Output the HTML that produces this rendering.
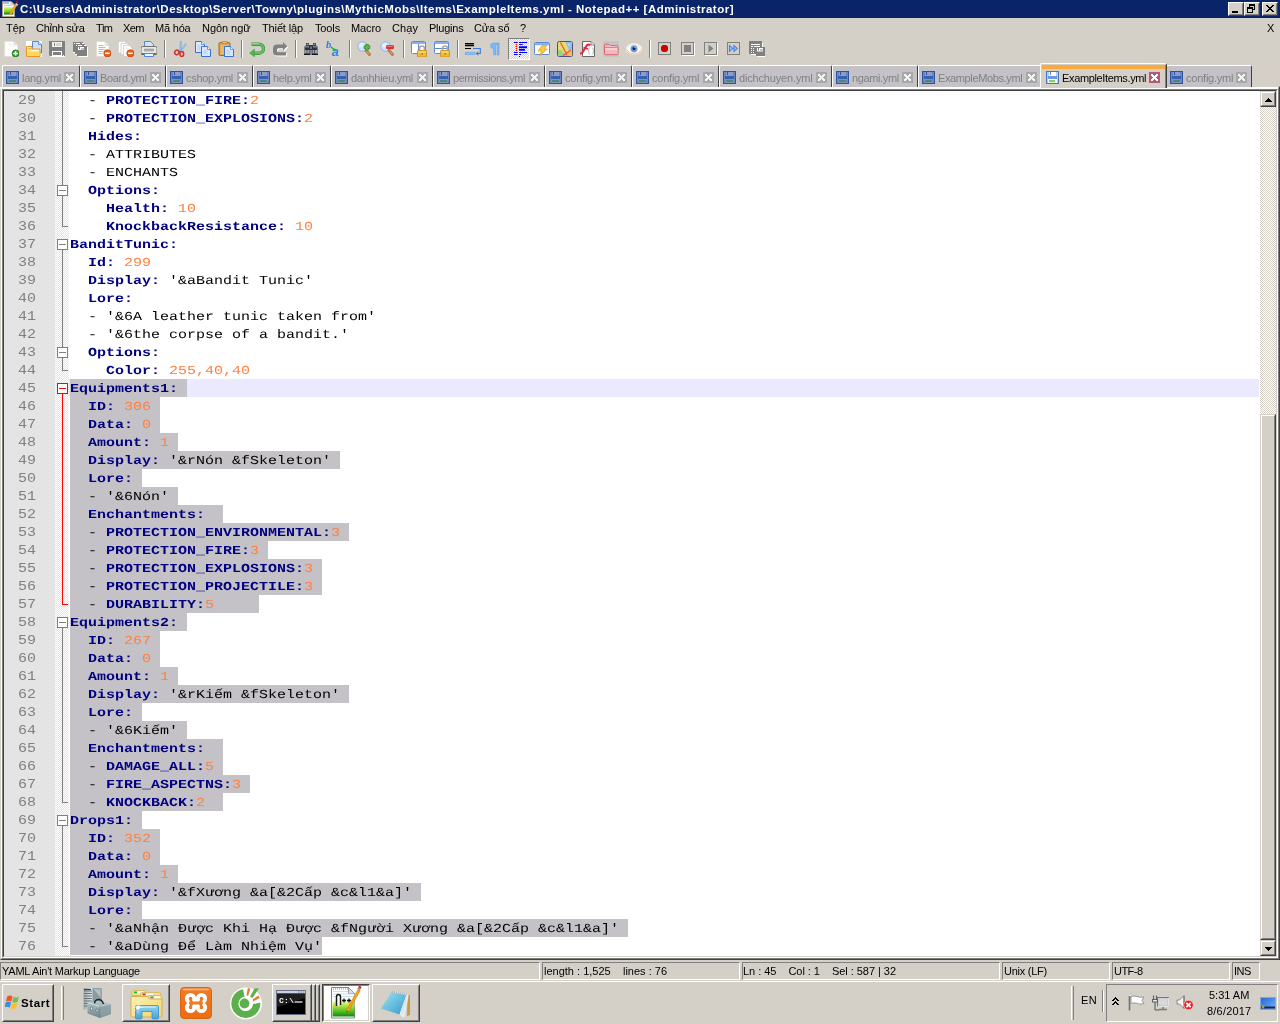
<!DOCTYPE html>
<html><head><meta charset="utf-8"><title>Notepad++</title>
<style>
*{box-sizing:border-box;margin:0;padding:0}
html,body{width:1280px;height:1024px;overflow:hidden;background:#d4d0c8;font-family:"Liberation Sans",sans-serif;font-size:11px;color:#000}
.a{position:absolute}
#title{left:0;top:0;width:1280px;height:18px;background:#0a246a}
#title .t{left:20px;top:1px;height:16px;line-height:16px;color:#fff;font-weight:bold;font-size:11.5px;white-space:nowrap;transform-origin:0 0}
.mi{top:21px;height:14px;line-height:14px;white-space:nowrap;font-size:11px;transform-origin:0 50%}
.tb{top:41px;width:16px;height:16px}
.tsep{top:40px;width:2px;height:18px;border-left:1px solid #808080;border-right:1px solid #fff}
/* tabs */
.tab{top:65px;height:22px;background:#c4c2c6;border-top:1px solid #fff;border-left:1px solid #fff;border-right:1px solid #404040;border-top-left-radius:2px;border-top-right-radius:2px}
.tab .ti{left:3px;top:5px;width:13px;height:13px}
.tab .tl{left:19px;top:5px;line-height:15px;color:#808080;font-size:11px;white-space:nowrap;transform-origin:0 50%}
.tab .tx{right:4px;top:6px;width:11px;height:11px}
.tab.act{top:63px;height:25px;background:#d4d0c8;z-index:2}
.tab.act:after{content:"";position:absolute;right:0;top:1px;bottom:0;width:1px;background:#808080}
.tab.act .or{left:1px;top:1px;right:1px;height:4px;background:#faaa3c}
.tab.act .ti{left:5px;top:7px}
.tab.act .tl{left:21px;top:7px;color:#000}
.tab.act .tx{right:6px;top:8px}
/* editor */
#fr{left:0;top:86px;width:1280px;height:874px;border:1px solid;border-color:transparent #404040 #404040 transparent}
#fr:before{content:"";position:absolute;left:0;top:0;right:0;bottom:0;border:1px solid;border-color:transparent #808080 #808080 #fff}
#ed{left:2px;top:89px;width:1276px;height:869px;background:#fff;border:1px solid;border-color:#808080 #fff #fff #808080}
#ed2{left:3px;top:90px;width:1274px;height:867px;border:1px solid;border-color:#404040 #d4d0c8 #d4d0c8 #404040}
#lnm{left:4px;top:91px;width:51px;height:865px;background:#e4e4e4}
#fm{left:55px;top:91px;width:14px;height:865px;background-color:#fff;background-image:linear-gradient(45deg,#e4e4e4 25%,transparent 25%,transparent 75%,#e4e4e4 75%),linear-gradient(45deg,#e4e4e4 25%,transparent 25%,transparent 75%,#e4e4e4 75%);background-size:2px 2px;background-position:0 0,1px 1px}
.ln{left:4px;width:32px;height:18px;line-height:18px;text-align:right;color:#808080;font-family:"Liberation Mono",monospace;font-size:15px;transform:translateY(1px) scaleY(.9);transform-origin:0 12px}
.cl{left:70px;height:18px;line-height:18px;font-family:"Liberation Mono",monospace;font-size:15px;white-space:pre;color:#000;text-rendering:geometricPrecision;transform:translateY(1px) scaleY(.82);transform-origin:0 12px}
.k{color:#000080;font-weight:bold}
.n{color:#ff8040}
.sel{left:70px;background:#c4c2c6;height:18px}
#cur{left:69px;top:379px;width:1190px;height:18px;background:#ebe9fe}
.fv{width:1px;background:#808080;left:62px}
.fh{height:1px;background:#808080;left:62px;width:6px}
.fb{left:57px;width:11px;height:11px;border:1px solid #808080;background:#fff}
.fb i{position:absolute;left:1px;top:4px;width:7px;height:1px;background:#808080}
.r{background:#ff0000 !important;border-color:#ff0000 !important}
.fb.r{background:#fff !important}
.fb.r i{background:#ff0000}
/* scrollbar */
#sbt{left:1260px;top:91px;width:16px;height:865px;background-color:#fff;background-image:linear-gradient(45deg,#d4d0c8 25%,transparent 25%,transparent 75%,#d4d0c8 75%),linear-gradient(45deg,#d4d0c8 25%,transparent 25%,transparent 75%,#d4d0c8 75%);background-size:2px 2px;background-position:0 0,1px 1px}
.sbb{left:1260px;width:16px;height:16px;background:#d4d0c8;border:1px solid;border-color:#d4d0c8 #404040 #404040 #d4d0c8}
.sbb:before{content:"";position:absolute;left:0;top:0;right:0;bottom:0;border:1px solid;border-color:#fff #808080 #808080 #fff}
/* status */
.sp{top:962px;height:18px;border:1px solid;border-color:#808080 #fff #fff #808080;font-size:11px;line-height:13px}
/* taskbar */
#tk{left:0;top:980px;width:1280px;height:44px}
#tk:before{content:"";position:absolute;left:0;top:1px;width:1280px;height:1px;background:#fff}
.rb{border:1px solid;border-color:#fff #404040 #404040 #fff}
.rb:before{content:"";position:absolute;left:0;top:0;right:0;bottom:0;border:1px solid;border-color:#d4d0c8 #808080 #808080 #d4d0c8}
.cb{top:2px;width:16px;height:14px;background:#d4d0c8;border:1px solid;border-color:#fff #404040 #404040 #fff}
.cb:before{content:"";position:absolute;left:0;top:0;right:0;bottom:0;border:1px solid;border-color:#d4d0c8 #808080 #808080 #d4d0c8}
.tpr{top:38px;width:22px;height:22px;border:1px solid;border-color:#808080 #fff #fff #808080;background-color:#fff;background-image:linear-gradient(45deg,#d4d0c8 25%,transparent 25%,transparent 75%,#d4d0c8 75%),linear-gradient(45deg,#d4d0c8 25%,transparent 25%,transparent 75%,#d4d0c8 75%);background-size:2px 2px;background-position:0 0,1px 1px}
.pb{border:1px solid;border-color:#404040 #fff #fff #404040;background-color:#fff}
.pb:before{content:"";position:absolute;left:0;top:0;right:0;bottom:0;border:1px solid;border-color:#808080 #d4d0c8 #d4d0c8 #808080}
#root{position:absolute;left:0;top:0;width:1280px;height:1024px;will-change:transform}

</style></head><body><div id="root">
<div id="title" class="a"><svg class="a" style="left:2px;top:0px" width="18" height="18" viewBox="0 0 18 18"><defs><linearGradient id="gt" x1="0" x2="0" y1="0" y2="1"><stop offset="0" stop-color="#e8f060"/><stop offset=".6" stop-color="#78d030"/><stop offset="1" stop-color="#0c6c0c"/></linearGradient></defs>
<path d="M.5 1.500h8.500l3.500 3.500v11.500h-12z" fill="#fff" stroke="#a8a090" stroke-width="1"/><path d="M9 1.500v3.500h3.500z" fill="#e8e8e8" stroke="#a0a0a0" stroke-width=".6"/>
<path d="M2 2.500v1M4 2.500v1M6 2.500v1" stroke="#0a246a" stroke-width="1.200"/><path d="M2 5.500h7" stroke="#c0d4e8" stroke-width="1"/><path d="M2 7.200h9.500v7.300h-9.500z" fill="url(#gt)"/>
<path d="M14 3.500l1.600 1l-6.200 9.500l-1.800 1l.2 -2z" fill="#f8b010" stroke="#d08808" stroke-width=".5"/><path d="M13.300 4.300l2.300 1.400l.8 -1.300l-2.300 -1.400z" fill="#c0cce0"/><circle cx="15.300" cy="1.800" r="1.300" fill="#c80010"/></svg>
<div class="a t" id="tt" style="letter-spacing:0.49px;">C:\Users\Administrator\Desktop\Server\Towny\plugins\MythicMobs\Items\ExampleItems.yml - Notepad++ [Administrator]</div><div class="a cb" style="left:1228px"><svg class="a" style="left:2px;top:2px" width="9" height="9" viewBox="0 0 9 9" shape-rendering="crispEdges"><rect x="1" y="6" width="6" height="2" fill="#000"/></svg></div>
<div class="a cb" style="left:1244px"><svg class="a" style="left:1px;top:1px" width="10" height="10" viewBox="0 0 10 10" shape-rendering="crispEdges"><path d="M3 0h6v6H7V5h1V2H4v1H3z M1 3h6v6H1z M2 5v3h4V5z" fill="#000" fill-rule="evenodd"/></svg></div>
<div class="a cb" style="left:1262px"><svg class="a" style="left:3px;top:2px" width="9" height="9" viewBox="0 0 9 9" shape-rendering="crispEdges"><path d="M0 0h2v1h1v1h2V1h1V0h2v1H7v1H6v1H5v1h1v1h1v1h1v1H6V6H5V5H3v1H2v1H0V6h1V5h1V4h1V3H2V2H1V1H0z" fill="#000"/></svg></div>
</div>
<div class="a mi" id="m0" style="left:6px;letter-spacing:0.01px;">Tệp</div><div class="a mi" id="m1" style="left:36px;letter-spacing:-0.253px;">Chỉnh sửa</div><div class="a mi" id="m2" style="left:96px;letter-spacing:-0.984px;">Tìm</div><div class="a mi" id="m3" style="left:123px;letter-spacing:-0.542px;">Xem</div><div class="a mi" id="m4" style="left:155px;letter-spacing:-0.201px;">Mã hóa</div><div class="a mi" id="m5" style="left:202px;letter-spacing:-0.057px;">Ngôn ngữ</div><div class="a mi" id="m6" style="left:262px;letter-spacing:-0.134px;">Thiết lập</div><div class="a mi" id="m7" style="left:315px;letter-spacing:-0.138px;">Tools</div><div class="a mi" id="m8" style="left:351px;letter-spacing:-0.113px;">Macro</div><div class="a mi" id="m9" style="left:392px;letter-spacing:0.078px;">Chạy</div><div class="a mi" id="m10" style="left:429px;letter-spacing:-0.225px;">Plugins</div><div class="a mi" id="m11" style="left:474px;letter-spacing:-0.102px;">Cửa sổ</div><div class="a mi" id="m12" style="left:520px;letter-spacing:-0.125px;">?</div><div class="a mi" style="left:1267px">X</div>
<svg class="a tb" style="left:3px" viewBox="0 0 16 16"><path d="M1.700 .5h9.300l3.500 3.500v11.300h-12.800z" fill="#fff" stroke="#e4e2de" stroke-width=".6"/><path d="M11 .5v3.500h3.500z" fill="#e8e8e8" stroke="#d0d0d0" stroke-width=".5"/><path d="M5 3h4M6 5h5" stroke="#eee" stroke-width="1"/>
<circle cx="12.600" cy="12.400" r="3.500" fill="#3a9a2c" stroke="#1f7a18" stroke-width=".8"/><path d="M12.600 10.200v4.400M10.400 12.400h4.400" stroke="#fff" stroke-width="1.5"/></svg>
<svg class="a tb" style="left:26px" viewBox="0 0 16 16"><rect x="0" y="0" width="16" height="16" fill="#fff"/><rect x="0" y="0" width="6" height="5" fill="#fff"/>
<path d="M6.5 .5h6l3 3v8.500h-9z" fill="#cfe0fb" stroke="#4a88e0" stroke-width="1"/><path d="M12.500 .5v3h3" fill="#e8f0ff" stroke="#4a88e0" stroke-width=".8"/>
<path d="M.5 5.500h5.500v2.500h8v7.500h-13.500z" fill="#fbe58a" stroke="#e8962c" stroke-width="1"/><path d="M1 11h12.500v4h-12.500z" fill="#f8d64e" opacity=".8"/><path d="M2 7.200h3l1 1h-4z" fill="#e8962c" opacity=".7"/><path d="M5 9.500h8" stroke="#fff6c8" stroke-width="1"/></svg>
<svg class="a tb" style="left:49px" viewBox="0 0 16 16"><path d="M1 1h15v15h-14l-1 -1z" fill="#fff"/><path d="M0 0h16v15h-1v-1h-1v1h-13l-1 -1z" fill="#808080"/>
<rect x="3" y="1" width="10" height="5" fill="#f4f2ee"/><rect x="5" y="2" width="1" height="3" fill="#808080"/><rect x="7" y="2" width="5" height="3" fill="#d8d4cc"/>
<rect x="3" y="10" width="10" height="5" fill="#fff"/><rect x="4" y="11" width="8" height="3" fill="#808080"/></svg>
<svg class="a tb" style="left:72px" viewBox="0 0 16 16"><path d="M2 2h10v2h2v2h2v10h-10v-2h-2v-2h-2z" fill="#fff"/>
<path d="M1 1h10v2h2v2h2v10h-10v-2h-2v-2h-2z" fill="#808080"/>
<rect x="2" y="2" width="1" height="1" fill="#fff"/><rect x="4" y="2" width="4" height="1" fill="#fff"/><rect x="10" y="2" width="1" height="1" fill="#fff"/>
<rect x="4" y="4" width="1" height="1" fill="#fff"/><rect x="6" y="4" width="4" height="1" fill="#fff"/><rect x="12" y="4" width="1" height="1" fill="#fff"/>
<rect x="6" y="6" width="6" height="3" fill="#fff"/><rect x="7" y="6" width="1" height="2" fill="#808080"/><rect x="9" y="7" width="3" height="2" fill="#c8c4bc"/>
<rect x="1" y="11" width="1" height="1" fill="#fff"/><rect x="3" y="13" width="1" height="1" fill="#fff"/></svg>
<svg class="a tb" style="left:95px" viewBox="0 0 16 16"><path d="M1.500 .5h8.500l4 4v11h-12.500z" fill="#fff" stroke="#d8d6d2" stroke-width=".7"/><path d="M10 .5v4h4z" fill="#eee" stroke="#ccc" stroke-width=".5"/>
<path d="M3.500 4.500h5M3.500 6.500h7M3.500 8.500h6M3.500 10.500h5M3.500 12.500h4" stroke="#b8b8b8" stroke-width="1"/><circle cx="12.4" cy="12.3" r="3.6" fill="#e8601a" stroke="#c84a0c" stroke-width=".8"/><rect x="10.100000000000001" y="11.55" width="4.600" height="1.500" fill="#fff"/></svg>
<svg class="a tb" style="left:118px" viewBox="0 0 16 16"><path d="M.5 .5h6l2 2v9.500h-8z" fill="#fff" stroke="#d0ceca" stroke-width=".7"/><path d="M3 2.500h6l2 2v9h-8z" fill="#fff" stroke="#c8c6c2" stroke-width=".7"/><path d="M5.500 4.500h6l2.500 2.500v8.500h-8.500z" fill="#fff" stroke="#c8c6c2" stroke-width=".7"/><path d="M7 7h4" stroke="#e0e0e0"/><circle cx="12.4" cy="12.3" r="3.6" fill="#e8601a" stroke="#c84a0c" stroke-width=".8"/><rect x="10.100000000000001" y="11.55" width="4.600" height="1.500" fill="#fff"/></svg>
<svg class="a tb" style="left:141px" viewBox="0 0 16 16"><path d="M3.500 6v-5.500h6l3 3v2.500" fill="#d4e4fc" stroke="#4a8ad8" stroke-width="1"/>
<path d="M1.500 5.500h13q1.500 0 1.500 2v5.500h-16v-5.500q0 -2 1.500 -2z" fill="#e8e8e8" stroke="#707070" stroke-width="1"/>
<rect x="3" y="7.500" width="10" height="3" fill="#b8b8b8"/><rect x="3" y="8.300" width="10" height="1" fill="#989898"/>
<path d="M.8 13h14.400" stroke="#303030" stroke-width="1"/>
<path d="M3.500 12.500h9v3h-9z" fill="#f0f6ff" stroke="#4a8ad8" stroke-width="1"/></svg>
<div class="a tsep" style="left:164px"></div>
<svg class="a tb" style="left:172px" viewBox="0 0 16 16"><path d="M8.500 0l1 .2l-.8 10h-1.200z" fill="#a8d0f0" stroke="#5a9ad0" stroke-width=".5"/><path d="M13.500 2.500l.7 .8l-5.200 7.500l-1.200 -.8z" fill="#a8d0f0" stroke="#5a9ad0" stroke-width=".5"/>
<ellipse cx="4.800" cy="11.400" rx="2.100" ry="2.300" fill="none" stroke="#d42c2c" stroke-width="1.500" transform="rotate(30 4.800 11.400)"/>
<ellipse cx="9.800" cy="13" rx="1.900" ry="2.400" fill="none" stroke="#d42c2c" stroke-width="1.500"/></svg>
<svg class="a tb" style="left:195px" viewBox="0 0 16 16"><path d="M1 1h6l3 3v7h-9z" fill="#fff"/><path d="M0.5 0.5h6l3 3v8h-9z" fill="#dbe8fd" stroke="#3a72d4" stroke-width="1"/><path d="M6.5 0.5v3h3" fill="#f4f8ff" stroke="#3a72d4" stroke-width=".7"/><path d="M2.500 3.500h3v6h-3z" fill="#c4d8f8"/><path d="M6.5 5.5h6l3 3v7h-9z" fill="#dbe8fd" stroke="#3a72d4" stroke-width="1"/><path d="M12.5 5.5v3h3" fill="#f4f8ff" stroke="#3a72d4" stroke-width=".7"/><path d="M8.500 8.500h4v5h-4z" fill="#c4d8f8"/></svg>
<svg class="a tb" style="left:218px" viewBox="0 0 16 16"><rect x="1" y="1.500" width="11" height="13" rx="1.200" fill="#d8a050" stroke="#a86820" stroke-width="1"/><rect x="4" y=".3" width="5" height="2.400" rx=".8" fill="#f0c878" stroke="#a86820" stroke-width=".7"/><rect x="2.300" y="3.500" width="8.400" height="10" fill="#e8b868"/><path d="M6.5 5.5h6l3 3v7h-9z" fill="#dbe8fd" stroke="#3a72d4" stroke-width="1"/><path d="M12.5 5.5v3h3" fill="#f4f8ff" stroke="#3a72d4" stroke-width=".7"/><path d="M8.500 8.500h4v5h-4z" fill="#c4d8f8"/></svg>
<div class="a tsep" style="left:241px"></div>
<svg class="a tb" style="left:249px" viewBox="0 0 16 16"><path d="M2.500 3.200h7.500a4.500 4.500 0 0 1 0 9h-5" fill="none" stroke="#3c9c3c" stroke-width="3.400" stroke-linecap="butt"/><path d="M2.500 3.200h7.500a4.500 4.500 0 0 1 0 9h-5" fill="none" stroke="#68c468" stroke-width="1.800"/><path d="M3 2.600h7" stroke="#a0e0a0" stroke-width=".7"/>
<path d="M5.300 8.300v7.400l-4.600 -3.700z" fill="#58b858" stroke="#3c9c3c" stroke-width=".7"/></svg>
<svg class="a tb" style="left:272px" viewBox="0 0 16 16"><g transform="translate(1 1)" fill="#fff"><path d="M11 .9l4.300 4.300l-4.300 4.300z"/><path d="M11 3.400v3.900h-4.500q-1.500 0 -1.500 1.500v1q0 1.400 1.500 1.400h7.500v3.400h-9q-4 0 -4 -4v-3q0 -4.200 4 -4.200z"/></g>
<path d="M11 .9l4.300 4.300l-4.300 4.300z" fill="#808080"/><path d="M11.500 3.400v3.900h-5q-1.500 0 -1.500 1.500v1q0 1.400 1.500 1.400h7.500v3.400h-9q-4 0 -4 -4v-3q0 -4.200 4 -4.200z" fill="#808080"/></svg>
<div class="a tsep" style="left:295px"></div>
<svg class="a tb" style="left:303px" viewBox="0 0 16 16"><path d="M3 2h3v2h4v-2h3v2.500l1.500 1v8.500h-6v-5h-1v5h-6v-8.500l1.500 -1z" fill="#2c333c"/><path d="M3.500 2.500h2v1.500h-2zM10.500 2.500h2v1.500h-2z" fill="#8a98a8"/><path d="M1.500 5.500l4.500 -1v2h-4.500zM14.500 5.500l-4.500 -1v2h4.500z" fill="#7c8a9a"/>
<rect x="2" y="9" width="4.500" height="3.500" fill="#9ca6b2"/><rect x="9.500" y="9" width="4.500" height="3.500" fill="#9ca6b2"/><rect x="3.500" y="9" width="1" height="3.500" fill="#4c5660"/><rect x="11" y="9" width="1" height="3.500" fill="#4c5660"/><rect x="1" y="12.800" width="6" height="1.200" fill="#101418"/><rect x="9" y="12.800" width="6" height="1.200" fill="#101418"/><rect x="7" y="5.500" width="2" height="2.500" fill="#687480"/></svg>
<svg class="a tb" style="left:326px" viewBox="0 0 16 16"><text x="0" y="7.300" font-family="Liberation Serif" font-style="italic" font-weight="bold" font-size="10.500" fill="#2c7cf0">b</text>
<text x="5.800" y="15.300" style="font-family:'Liberation Sans'" font-style="italic" font-weight="bold" font-size="13" fill="#2c84f4">a</text>
<path d="M4.800 5.800l3.400 3" stroke="#2fa84f" stroke-width="1.500"/><path d="M10.200 10.300l-4 -.2l2.500 -3z" fill="#2fa84f"/></svg>
<div class="a tsep" style="left:349px"></div>
<svg class="a tb" style="left:357px" viewBox="0 0 16 16"><circle cx="5.500" cy="5.500" r="4.800" fill="#cfe2fb" stroke="#9cbcec" stroke-width="1.200"/><circle cx="4.500" cy="4.300" r="2.300" fill="#eaf3ff" opacity=".9"/><path d="M9 9.500l3.500 4" stroke="#a87038" stroke-width="2.800" stroke-linecap="round"/><path d="M9.200 9.800l3 3.400" stroke="#d8a868" stroke-width="1.200" stroke-linecap="round"/><path d="M10 3v6.500M6.700 6.200h6.600" stroke="#2c8c2c" stroke-width="3.200"/><path d="M10 3.600v5.300M7.300 6.200h5.400" stroke="#58b848" stroke-width="1.800"/></svg>
<svg class="a tb" style="left:380px" viewBox="0 0 16 16"><circle cx="5.500" cy="5.500" r="4.800" fill="#cfe2fb" stroke="#9cbcec" stroke-width="1.200"/><circle cx="4.500" cy="4.300" r="2.300" fill="#eaf3ff" opacity=".9"/><path d="M9 9.500l3.500 4" stroke="#a87038" stroke-width="2.800" stroke-linecap="round"/><path d="M9.200 9.800l3 3.400" stroke="#d8a868" stroke-width="1.200" stroke-linecap="round"/><rect x="6.500" y="4.500" width="7" height="3.200" rx=".5" fill="#e81c24" stroke="#c01018" stroke-width=".5"/><rect x="7.300" y="5.200" width="5.400" height=".9" fill="#ff8a8a"/></svg>
<div class="a tsep" style="left:403px"></div>
<svg class="a tb" style="left:411px" viewBox="0 0 16 16"><rect x=".5" y=".5" width="14" height="12" rx="1" fill="#fff" stroke="#5a8ad8" stroke-width="1"/><rect x="1" y="1" width="13" height="2" fill="#8cb0ec"/><path d="M7.500 3v9.500" stroke="#5a8ad8" stroke-width="1"/><path d="M8.500 10v-2.500a2.500 2.500 0 0 1 5 0v2.500" fill="none" stroke="#a8a8a8" stroke-width="1.600"/><rect x="6.500" y="9.500" width="9" height="6.500" rx=".6" fill="#f0b838" stroke="#c88c18" stroke-width=".8"/><rect x="7.300" y="10.300" width="7.400" height="1.400" fill="#fcdc80"/><rect x="10.500" y="12" width="1.200" height="2" fill="#b07810"/></svg>
<svg class="a tb" style="left:434px" viewBox="0 0 16 16"><rect x=".5" y=".5" width="14" height="12" rx="1" fill="#fff" stroke="#5a8ad8" stroke-width="1"/><rect x="1" y="1" width="13" height="2" fill="#8cb0ec"/><path d="M1 7.500h13" stroke="#5a8ad8" stroke-width="1"/><path d="M8.500 10v-2.500a2.500 2.500 0 0 1 5 0v2.500" fill="none" stroke="#a8a8a8" stroke-width="1.600"/><rect x="6.500" y="9.500" width="9" height="6.500" rx=".6" fill="#f0b838" stroke="#c88c18" stroke-width=".8"/><rect x="7.300" y="10.300" width="7.400" height="1.400" fill="#fcdc80"/><rect x="10.500" y="12" width="1.200" height="2" fill="#b07810"/></svg>
<div class="a tsep" style="left:457px"></div>
<svg class="a tb" style="left:465px" viewBox="0 0 16 16"><path d="M0 2.700h9M0 4.500h9" stroke="#000" stroke-width="1.300"/><path d="M0 7.500h6" stroke="#000" stroke-width="1"/><rect x="0" y="11.200" width="10" height="2.600" fill="#8cbcf4" stroke="#64a0e8" stroke-width=".5"/>
<path d="M8 7.500h7.300v5h-2.800" fill="none" stroke="#3a7cd8" stroke-width="1.100"/><path d="M13.300 10.300v4.400l-2.600 -2.200z" fill="#3a7cd8"/></svg>
<svg class="a tb" style="left:488px" viewBox="0 0 16 16"><path d="M6 2h5v12h-1.800v-10.500h-1.700v10.500h-1.800v-6.500q-3.200 0 -3.200 -2.800t3.500 -2.700z" fill="#80b8f6" stroke="#5ca0f0" stroke-width=".6"/></svg>
<div class="a tpr" style="left:508px"></div>
<svg class="a tb" style="left:511px" viewBox="0 0 16 16"><g transform="translate(1 1)"><path d="M2 .5h3.700M7 .5h9M7 2.500h3.600M2 10.500h3.700M7 10.500h9M2 12.500h3.700M7 12.500h2M7 14.500h1" stroke="#0000ff" stroke-width="1.200"/><path d="M7 4.200h9v2h-9zM7 7h6v1.800h-6z" fill="#0000ff"/>
<path d="M4.400 2v7.500" stroke="#ff0000" stroke-width="1.200" stroke-dasharray="1 1"/></g></svg>
<svg class="a tb" style="left:534px" viewBox="0 0 16 16"><rect x=".5" y="1.500" width="15" height="12" rx="1" fill="#fff" stroke="#5a8cd8" stroke-width="1"/><rect x="1" y="2" width="14" height="2.200" fill="#8cb0ec"/>
<path d="M8 4.500h5l-3 3.500h3.500l-8 7l2 -5h-3.500z" fill="#f4cc48" stroke="#d8a020" stroke-width=".7"/></svg>
<svg class="a tb" style="left:557px" viewBox="0 0 16 16"><rect x=".5" y=".5" width="15" height="15" rx="1.800" fill="#e4dc6c" stroke="#505078" stroke-width="1"/><path d="M8.500 1h6.500v7l-3 1.500z" fill="#8cc0f0"/><rect x="11" y="2.500" width="2.500" height="2.500" fill="#b0d4f4"/>
<path d="M1 9.500q3 -1.500 4.500 1.500t4 .5l-1 3.500h-7.500z" fill="#98d47c"/><path d="M9 10.500l6 -2v6.500h-7z" fill="#f0c454"/><path d="M9 12l3 3h-4z" fill="#98d47c"/>
<path d="M3.500 1.500l6.500 12.500M14 9l-8 5.500" stroke="#f05050" stroke-width="1.200"/></svg>
<svg class="a tb" style="left:580px" viewBox="0 0 16 16"><path d="M2.500 .5h8.500l3.500 3.500v11.500h-12z" fill="#fff" stroke="#686868" stroke-width="1"/><path d="M11 .5v3.500h3.500" fill="#f0f0f0" stroke="#686868" stroke-width=".8"/>
<path d="M9.800 7q-1 0 -1 1.200v.8q0 1 -.8 1q.8 0 .8 1v.8q0 1.200 1 1.200M12.200 7q1 0 1 1.200v.8q0 1 .8 1q-.8 0 -.8 1v.8q0 1.200 -1 1.200" fill="none" stroke="#a8b8b4" stroke-width="1"/>
<path d="M9.500 3.800q-2 -.8 -3.300 1.500l-3 5q-1 2 -2.500 2.200" fill="none" stroke="#e82838" stroke-width="2.200" stroke-linecap="round"/><path d="M3.500 6.500l4.500 1.500" stroke="#e82838" stroke-width="1.400"/></svg>
<svg class="a tb" style="left:603px" viewBox="0 0 16 16"><rect x="0" y="0" width="16" height="16" fill="#c6c4c6"/><path d="M1.500 4.200q0 -1 1 -1h3.500l1.500 1.500h6.500q1 0 1 1v7q0 1 -1 1h-11.500q-1 0 -1 -1z" fill="#f6d0d2" stroke="#d8606a" stroke-width="1"/><path d="M2 6.500h12.500" stroke="#e07880" stroke-width=".9"/><path d="M2 9h12.500v4h-12.500z" fill="#eeb0b4" opacity=".7"/><path d="M2.500 5h3.500" stroke="#e89098" stroke-width="1"/></svg>
<svg class="a tb" style="left:626px" viewBox="0 0 16 16"><ellipse cx="8" cy="8" rx="7.800" ry="5.400" fill="#fff" stroke="#f4e8d8" stroke-width=".8"/><path d="M.5 8q7.500 -8.500 15 0" fill="none" stroke="#e8d8c0" stroke-width=".8"/><path d="M.8 9q7.200 8 14.600 0" fill="none" stroke="#f0b080" stroke-width=".9"/>
<circle cx="8" cy="7.800" r="3.600" fill="#7ca8e0"/><circle cx="8" cy="7.800" r="2.600" fill="#5a8cd0"/><circle cx="8" cy="7.600" r="1.300" fill="#0c1428"/><circle cx="9" cy="6.600" r=".6" fill="#fff" opacity=".8"/></svg>
<div class="a tsep" style="left:649px"></div>
<svg class="a tb" style="left:657px" viewBox="0 0 16 16"><rect x="1.500" y="1.500" width="12" height="12" fill="none" stroke="#808080" stroke-width="1"/><path d="M5.800 4h3.400l1.800 1.800v3.400l-1.800 1.800h-3.400l-1.800 -1.800v-3.400z" fill="#cc0000"/></svg>
<svg class="a tb" style="left:680px" viewBox="0 0 16 16"><path d="M14.500 2v12.500h-12.500" fill="none" stroke="#fff" stroke-width="1"/><rect x="1.500" y="1.500" width="12" height="12" fill="none" stroke="#808080" stroke-width="1"/><rect x="4" y="4" width="7" height="7" fill="#808080"/></svg>
<svg class="a tb" style="left:703px" viewBox="0 0 16 16"><path d="M14.500 2v12.500h-12.500" fill="none" stroke="#fff" stroke-width="1"/><rect x="1.500" y="1.500" width="12" height="12" fill="none" stroke="#808080" stroke-width="1"/><path d="M5.500 3.500l5 4l-5 4z" fill="#808080"/></svg>
<svg class="a tb" style="left:726px" viewBox="0 0 16 16"><rect x="1.500" y="1.500" width="12" height="12" fill="none" stroke="#808080" stroke-width="1"/><path d="M3 3.500l4.500 4l-4.500 4zM7.500 3.500l4.500 4l-4.500 4z" fill="#3a7ce0"/><path d="M4 5.500l2.200 2l-2.200 2zM8.500 5.500l2.200 2l-2.200 2z" fill="#9cc4f8"/></svg>
<svg class="a tb" style="left:749px" viewBox="0 0 16 16"><path d="M1 1h12v5h3v10h-9v-3h-6z" fill="#fff" transform="translate(1 1)"/><rect x="0" y="0" width="13" height="13" fill="#808080"/><rect x="7" y="6" width="9" height="9" fill="#808080"/>
<path d="M2 3.500h9M2 5.500h2M5 5.500h6M2 7.500h1M2 9.500h1M2 11.500h1M4 7.500h1M4 9.500h1M4 11.500h1" stroke="#fff" stroke-width="1"/><rect x="8" y="7" width="6" height="3.500" fill="#fff"/><rect x="9" y="7" width="1" height="2.500" fill="#808080"/><rect x="11" y="8" width="3" height="2.500" fill="#c8c4bc"/></svg>
<div class="a" style="left:0;top:87px;width:1278px;height:2px;background:#fff"></div><div class="a tab" style="left:2px;width:78px"><svg class="a ti" viewBox="0 0 13 13" shape-rendering="crispEdges"><rect x="0" y="0" width="13" height="13" rx="1" fill="#2c54a4"/><rect x="1" y="1" width="11" height="11" fill="#6c84bc"/><rect x="3" y="1" width="7" height="4" fill="#8c9cc8"/><rect x="4" y="1" width="1" height="3" fill="#2c54a4"/><rect x="2" y="5" width="9" height="3" fill="#3860b0"/><rect x="2" y="8" width="9" height="4" fill="#7c90c0"/><rect x="3" y="9" width="7" height="2" fill="#4c8870"/></svg><span class="a tl" id="tab0" style="letter-spacing:-0.246px;">lang.yml</span><svg class="a tx" viewBox="0 0 11 11" shape-rendering="crispEdges"><rect width="11" height="11" rx="1" fill="#a9a8a8"/><path d="M2 2h2v1h1v1h1V3h1V2h2v2H8v1H7v1h1v1h1v2H7V8H6V7H5v1H4v1H2V7h1V6h1V5H3V4H2z" fill="#f4f4f4"/></svg></div><div class="a tab" style="left:80px;width:86px"><svg class="a ti" viewBox="0 0 13 13" shape-rendering="crispEdges"><rect x="0" y="0" width="13" height="13" rx="1" fill="#2c54a4"/><rect x="1" y="1" width="11" height="11" fill="#6c84bc"/><rect x="3" y="1" width="7" height="4" fill="#8c9cc8"/><rect x="4" y="1" width="1" height="3" fill="#2c54a4"/><rect x="2" y="5" width="9" height="3" fill="#3860b0"/><rect x="2" y="8" width="9" height="4" fill="#7c90c0"/><rect x="3" y="9" width="7" height="2" fill="#4c8870"/></svg><span class="a tl" id="tab1" style="letter-spacing:-0.337px;">Board.yml</span><svg class="a tx" viewBox="0 0 11 11" shape-rendering="crispEdges"><rect width="11" height="11" rx="1" fill="#a9a8a8"/><path d="M2 2h2v1h1v1h1V3h1V2h2v2H8v1H7v1h1v1h1v2H7V8H6V7H5v1H4v1H2V7h1V6h1V5H3V4H2z" fill="#f4f4f4"/></svg></div><div class="a tab" style="left:166px;width:87px"><svg class="a ti" viewBox="0 0 13 13" shape-rendering="crispEdges"><rect x="0" y="0" width="13" height="13" rx="1" fill="#2c54a4"/><rect x="1" y="1" width="11" height="11" fill="#6c84bc"/><rect x="3" y="1" width="7" height="4" fill="#8c9cc8"/><rect x="4" y="1" width="1" height="3" fill="#2c54a4"/><rect x="2" y="5" width="9" height="3" fill="#3860b0"/><rect x="2" y="8" width="9" height="4" fill="#7c90c0"/><rect x="3" y="9" width="7" height="2" fill="#4c8870"/></svg><span class="a tl" id="tab2" style="letter-spacing:-0.281px;">cshop.yml</span><svg class="a tx" viewBox="0 0 11 11" shape-rendering="crispEdges"><rect width="11" height="11" rx="1" fill="#a9a8a8"/><path d="M2 2h2v1h1v1h1V3h1V2h2v2H8v1H7v1h1v1h1v2H7V8H6V7H5v1H4v1H2V7h1V6h1V5H3V4H2z" fill="#f4f4f4"/></svg></div><div class="a tab" style="left:253px;width:78px"><svg class="a ti" viewBox="0 0 13 13" shape-rendering="crispEdges"><rect x="0" y="0" width="13" height="13" rx="1" fill="#2c54a4"/><rect x="1" y="1" width="11" height="11" fill="#6c84bc"/><rect x="3" y="1" width="7" height="4" fill="#8c9cc8"/><rect x="4" y="1" width="1" height="3" fill="#2c54a4"/><rect x="2" y="5" width="9" height="3" fill="#3860b0"/><rect x="2" y="8" width="9" height="4" fill="#7c90c0"/><rect x="3" y="9" width="7" height="2" fill="#4c8870"/></svg><span class="a tl" id="tab3" style="letter-spacing:-0.309px;">help.yml</span><svg class="a tx" viewBox="0 0 11 11" shape-rendering="crispEdges"><rect width="11" height="11" rx="1" fill="#a9a8a8"/><path d="M2 2h2v1h1v1h1V3h1V2h2v2H8v1H7v1h1v1h1v2H7V8H6V7H5v1H4v1H2V7h1V6h1V5H3V4H2z" fill="#f4f4f4"/></svg></div><div class="a tab" style="left:331px;width:102px"><svg class="a ti" viewBox="0 0 13 13" shape-rendering="crispEdges"><rect x="0" y="0" width="13" height="13" rx="1" fill="#2c54a4"/><rect x="1" y="1" width="11" height="11" fill="#6c84bc"/><rect x="3" y="1" width="7" height="4" fill="#8c9cc8"/><rect x="4" y="1" width="1" height="3" fill="#2c54a4"/><rect x="2" y="5" width="9" height="3" fill="#3860b0"/><rect x="2" y="8" width="9" height="4" fill="#7c90c0"/><rect x="3" y="9" width="7" height="2" fill="#4c8870"/></svg><span class="a tl" id="tab4" style="letter-spacing:-0.286px;">danhhieu.yml</span><svg class="a tx" viewBox="0 0 11 11" shape-rendering="crispEdges"><rect width="11" height="11" rx="1" fill="#a9a8a8"/><path d="M2 2h2v1h1v1h1V3h1V2h2v2H8v1H7v1h1v1h1v2H7V8H6V7H5v1H4v1H2V7h1V6h1V5H3V4H2z" fill="#f4f4f4"/></svg></div><div class="a tab" style="left:433px;width:112px"><svg class="a ti" viewBox="0 0 13 13" shape-rendering="crispEdges"><rect x="0" y="0" width="13" height="13" rx="1" fill="#2c54a4"/><rect x="1" y="1" width="11" height="11" fill="#6c84bc"/><rect x="3" y="1" width="7" height="4" fill="#8c9cc8"/><rect x="4" y="1" width="1" height="3" fill="#2c54a4"/><rect x="2" y="5" width="9" height="3" fill="#3860b0"/><rect x="2" y="8" width="9" height="4" fill="#7c90c0"/><rect x="3" y="9" width="7" height="2" fill="#4c8870"/></svg><span class="a tl" id="tab5" style="letter-spacing:-0.457px;">permissions.yml</span><svg class="a tx" viewBox="0 0 11 11" shape-rendering="crispEdges"><rect width="11" height="11" rx="1" fill="#a9a8a8"/><path d="M2 2h2v1h1v1h1V3h1V2h2v2H8v1H7v1h1v1h1v2H7V8H6V7H5v1H4v1H2V7h1V6h1V5H3V4H2z" fill="#f4f4f4"/></svg></div><div class="a tab" style="left:545px;width:87px"><svg class="a ti" viewBox="0 0 13 13" shape-rendering="crispEdges"><rect x="0" y="0" width="13" height="13" rx="1" fill="#2c54a4"/><rect x="1" y="1" width="11" height="11" fill="#6c84bc"/><rect x="3" y="1" width="7" height="4" fill="#8c9cc8"/><rect x="4" y="1" width="1" height="3" fill="#2c54a4"/><rect x="2" y="5" width="9" height="3" fill="#3860b0"/><rect x="2" y="8" width="9" height="4" fill="#7c90c0"/><rect x="3" y="9" width="7" height="2" fill="#4c8870"/></svg><span class="a tl" id="tab6" style="letter-spacing:-0.228px;">config.yml</span><svg class="a tx" viewBox="0 0 11 11" shape-rendering="crispEdges"><rect width="11" height="11" rx="1" fill="#a9a8a8"/><path d="M2 2h2v1h1v1h1V3h1V2h2v2H8v1H7v1h1v1h1v2H7V8H6V7H5v1H4v1H2V7h1V6h1V5H3V4H2z" fill="#f4f4f4"/></svg></div><div class="a tab" style="left:632px;width:87px"><svg class="a ti" viewBox="0 0 13 13" shape-rendering="crispEdges"><rect x="0" y="0" width="13" height="13" rx="1" fill="#2c54a4"/><rect x="1" y="1" width="11" height="11" fill="#6c84bc"/><rect x="3" y="1" width="7" height="4" fill="#8c9cc8"/><rect x="4" y="1" width="1" height="3" fill="#2c54a4"/><rect x="2" y="5" width="9" height="3" fill="#3860b0"/><rect x="2" y="8" width="9" height="4" fill="#7c90c0"/><rect x="3" y="9" width="7" height="2" fill="#4c8870"/></svg><span class="a tl" id="tab7" style="letter-spacing:-0.228px;">config.yml</span><svg class="a tx" viewBox="0 0 11 11" shape-rendering="crispEdges"><rect width="11" height="11" rx="1" fill="#a9a8a8"/><path d="M2 2h2v1h1v1h1V3h1V2h2v2H8v1H7v1h1v1h1v2H7V8H6V7H5v1H4v1H2V7h1V6h1V5H3V4H2z" fill="#f4f4f4"/></svg></div><div class="a tab" style="left:719px;width:113px"><svg class="a ti" viewBox="0 0 13 13" shape-rendering="crispEdges"><rect x="0" y="0" width="13" height="13" rx="1" fill="#2c54a4"/><rect x="1" y="1" width="11" height="11" fill="#6c84bc"/><rect x="3" y="1" width="7" height="4" fill="#8c9cc8"/><rect x="4" y="1" width="1" height="3" fill="#2c54a4"/><rect x="2" y="5" width="9" height="3" fill="#3860b0"/><rect x="2" y="8" width="9" height="4" fill="#7c90c0"/><rect x="3" y="9" width="7" height="2" fill="#4c8870"/></svg><span class="a tl" id="tab8" style="letter-spacing:-0.166px;">dichchuyen.yml</span><svg class="a tx" viewBox="0 0 11 11" shape-rendering="crispEdges"><rect width="11" height="11" rx="1" fill="#a9a8a8"/><path d="M2 2h2v1h1v1h1V3h1V2h2v2H8v1H7v1h1v1h1v2H7V8H6V7H5v1H4v1H2V7h1V6h1V5H3V4H2z" fill="#f4f4f4"/></svg></div><div class="a tab" style="left:832px;width:86px"><svg class="a ti" viewBox="0 0 13 13" shape-rendering="crispEdges"><rect x="0" y="0" width="13" height="13" rx="1" fill="#2c54a4"/><rect x="1" y="1" width="11" height="11" fill="#6c84bc"/><rect x="3" y="1" width="7" height="4" fill="#8c9cc8"/><rect x="4" y="1" width="1" height="3" fill="#2c54a4"/><rect x="2" y="5" width="9" height="3" fill="#3860b0"/><rect x="2" y="8" width="9" height="4" fill="#7c90c0"/><rect x="3" y="9" width="7" height="2" fill="#4c8870"/></svg><span class="a tl" id="tab9" style="letter-spacing:-0.375px;">ngami.yml</span><svg class="a tx" viewBox="0 0 11 11" shape-rendering="crispEdges"><rect width="11" height="11" rx="1" fill="#a9a8a8"/><path d="M2 2h2v1h1v1h1V3h1V2h2v2H8v1H7v1h1v1h1v2H7V8H6V7H5v1H4v1H2V7h1V6h1V5H3V4H2z" fill="#f4f4f4"/></svg></div><div class="a tab" style="left:918px;width:124px"><svg class="a ti" viewBox="0 0 13 13" shape-rendering="crispEdges"><rect x="0" y="0" width="13" height="13" rx="1" fill="#2c54a4"/><rect x="1" y="1" width="11" height="11" fill="#6c84bc"/><rect x="3" y="1" width="7" height="4" fill="#8c9cc8"/><rect x="4" y="1" width="1" height="3" fill="#2c54a4"/><rect x="2" y="5" width="9" height="3" fill="#3860b0"/><rect x="2" y="8" width="9" height="4" fill="#7c90c0"/><rect x="3" y="9" width="7" height="2" fill="#4c8870"/></svg><span class="a tl" id="tab10" style="letter-spacing:-0.374px;">ExampleMobs.yml</span><svg class="a tx" viewBox="0 0 11 11" shape-rendering="crispEdges"><rect width="11" height="11" rx="1" fill="#a9a8a8"/><path d="M2 2h2v1h1v1h1V3h1V2h2v2H8v1H7v1h1v1h1v2H7V8H6V7H5v1H4v1H2V7h1V6h1V5H3V4H2z" fill="#f4f4f4"/></svg></div><div class="a tab act" style="left:1040px;width:127px"><div class="a or"></div><svg class="a ti" viewBox="0 0 13 13" shape-rendering="crispEdges"><rect x="0" y="0" width="13" height="13" rx="1.5" fill="#4878c8"/><rect x="1" y="1" width="11" height="11" fill="#b4ccf4"/><rect x="3" y="1" width="7" height="4" fill="#fff"/><rect x="4" y="1" width="1" height="3" fill="#5a88d8"/><rect x="2" y="5" width="9" height="3" fill="#6c9ae0"/><rect x="2" y="8" width="9" height="4" fill="#fff"/><rect x="3" y="9" width="6" height="2" fill="#90cc78"/><rect x="3" y="11" width="7" height="1" fill="#d8f0c0"/></svg><span class="a tl" id="tab11" style="letter-spacing:-0.354px;">ExampleItems.yml</span><svg class="a tx" viewBox="0 0 11 11" shape-rendering="crispEdges"><rect width="11" height="11" rx="1" fill="#b4587c"/><path d="M2 2h2v1h1v1h1V3h1V2h2v2H8v1H7v1h1v1h1v2H7V8H6V7H5v1H4v1H2V7h1V6h1V5H3V4H2z" fill="#fff"/></svg></div><div class="a tab" style="left:1166px;width:86px"><svg class="a ti" viewBox="0 0 13 13" shape-rendering="crispEdges"><rect x="0" y="0" width="13" height="13" rx="1" fill="#2c54a4"/><rect x="1" y="1" width="11" height="11" fill="#6c84bc"/><rect x="3" y="1" width="7" height="4" fill="#8c9cc8"/><rect x="4" y="1" width="1" height="3" fill="#2c54a4"/><rect x="2" y="5" width="9" height="3" fill="#3860b0"/><rect x="2" y="8" width="9" height="4" fill="#7c90c0"/><rect x="3" y="9" width="7" height="2" fill="#4c8870"/></svg><span class="a tl" id="tab12" style="letter-spacing:-0.228px;">config.yml</span><svg class="a tx" viewBox="0 0 11 11" shape-rendering="crispEdges"><rect width="11" height="11" rx="1" fill="#a9a8a8"/><path d="M2 2h2v1h1v1h1V3h1V2h2v2H8v1H7v1h1v1h1v2H7V8H6V7H5v1H4v1H2V7h1V6h1V5H3V4H2z" fill="#f4f4f4"/></svg></div>
<div id="fr" class="a"></div><div id="ed" class="a"></div><div id="ed2" class="a"></div><div id="lnm" class="a"></div><div id="fm" class="a"></div>
<div id="cur" class="a"></div>
<div class="a sel" style="top:379px;width:117px"></div><div class="a sel" style="top:397px;width:90px"></div><div class="a sel" style="top:415px;width:90px"></div><div class="a sel" style="top:433px;width:108px"></div><div class="a sel" style="top:451px;width:270px"></div><div class="a sel" style="top:469px;width:72px"></div><div class="a sel" style="top:487px;width:108px"></div><div class="a sel" style="top:505px;width:153px"></div><div class="a sel" style="top:523px;width:279px"></div><div class="a sel" style="top:541px;width:198px"></div><div class="a sel" style="top:559px;width:252px"></div><div class="a sel" style="top:577px;width:252px"></div><div class="a sel" style="top:595px;width:189px"></div><div class="a sel" style="top:613px;width:117px"></div><div class="a sel" style="top:631px;width:90px"></div><div class="a sel" style="top:649px;width:90px"></div><div class="a sel" style="top:667px;width:108px"></div><div class="a sel" style="top:685px;width:279px"></div><div class="a sel" style="top:703px;width:72px"></div><div class="a sel" style="top:721px;width:117px"></div><div class="a sel" style="top:739px;width:153px"></div><div class="a sel" style="top:757px;width:153px"></div><div class="a sel" style="top:775px;width:180px"></div><div class="a sel" style="top:793px;width:153px"></div><div class="a sel" style="top:811px;width:72px"></div><div class="a sel" style="top:829px;width:90px"></div><div class="a sel" style="top:847px;width:90px"></div><div class="a sel" style="top:865px;width:108px"></div><div class="a sel" style="top:883px;width:351px"></div><div class="a sel" style="top:901px;width:72px"></div><div class="a sel" style="top:919px;width:558px"></div><div class="a sel" style="top:937px;width:252px"></div>
<div class="a fv" style="top:91px;height:94px"></div><div class="a fv" style="top:196px;height:31px"></div><div class="a fv" style="top:250px;height:97px"></div><div class="a fv" style="top:358px;height:13px"></div><div class="a fv r" style="top:394px;height:211px"></div><div class="a fv" style="top:628px;height:175px"></div><div class="a fv" style="top:826px;height:121px"></div><div class="a fh" style="top:226px"></div><div class="a fh" style="top:370px"></div><div class="a fh r" style="top:604px"></div><div class="a fh" style="top:802px"></div><div class="a fh" style="top:946px"></div><div class="a fb" style="top:185px"><i></i></div><div class="a fb" style="top:239px"><i></i></div><div class="a fb" style="top:347px"><i></i></div><div class="a fb r" style="top:383px"><i></i></div><div class="a fb" style="top:617px"><i></i></div><div class="a fb" style="top:815px"><i></i></div>
<div class="a ln" style="top:91px">29</div><div class="a cl" style="top:91px">  - <span class="k">PROTECTION_FIRE:</span><span class="n">2</span></div>
<div class="a ln" style="top:109px">30</div><div class="a cl" style="top:109px">  - <span class="k">PROTECTION_EXPLOSIONS:</span><span class="n">2</span></div>
<div class="a ln" style="top:127px">31</div><div class="a cl" style="top:127px">  <span class="k">Hides:</span></div>
<div class="a ln" style="top:145px">32</div><div class="a cl" style="top:145px">  - ATTRIBUTES</div>
<div class="a ln" style="top:163px">33</div><div class="a cl" style="top:163px">  - ENCHANTS</div>
<div class="a ln" style="top:181px">34</div><div class="a cl" style="top:181px">  <span class="k">Options:</span></div>
<div class="a ln" style="top:199px">35</div><div class="a cl" style="top:199px">    <span class="k">Health:</span> <span class="n">10</span></div>
<div class="a ln" style="top:217px">36</div><div class="a cl" style="top:217px">    <span class="k">KnockbackResistance:</span> <span class="n">10</span></div>
<div class="a ln" style="top:235px">37</div><div class="a cl" style="top:235px"><span class="k">BanditTunic:</span></div>
<div class="a ln" style="top:253px">38</div><div class="a cl" style="top:253px">  <span class="k">Id:</span> <span class="n">299</span></div>
<div class="a ln" style="top:271px">39</div><div class="a cl" style="top:271px">  <span class="k">Display:</span> '&amp;aBandit Tunic'</div>
<div class="a ln" style="top:289px">40</div><div class="a cl" style="top:289px">  <span class="k">Lore:</span></div>
<div class="a ln" style="top:307px">41</div><div class="a cl" style="top:307px">  - '&amp;6A leather tunic taken from'</div>
<div class="a ln" style="top:325px">42</div><div class="a cl" style="top:325px">  - '&amp;6the corpse of a bandit.'</div>
<div class="a ln" style="top:343px">43</div><div class="a cl" style="top:343px">  <span class="k">Options:</span></div>
<div class="a ln" style="top:361px">44</div><div class="a cl" style="top:361px">    <span class="k">Color:</span> <span class="n">255,40,40</span></div>
<div class="a ln" style="top:379px">45</div><div class="a cl" style="top:379px"><span class="k">Equipments1:</span></div>
<div class="a ln" style="top:397px">46</div><div class="a cl" style="top:397px">  <span class="k">ID:</span> <span class="n">306</span></div>
<div class="a ln" style="top:415px">47</div><div class="a cl" style="top:415px">  <span class="k">Data:</span> <span class="n">0</span></div>
<div class="a ln" style="top:433px">48</div><div class="a cl" style="top:433px">  <span class="k">Amount:</span> <span class="n">1</span></div>
<div class="a ln" style="top:451px">49</div><div class="a cl" style="top:451px">  <span class="k">Display:</span> '&amp;rNón &amp;fSkeleton'</div>
<div class="a ln" style="top:469px">50</div><div class="a cl" style="top:469px">  <span class="k">Lore:</span></div>
<div class="a ln" style="top:487px">51</div><div class="a cl" style="top:487px">  - '&amp;6Nón'</div>
<div class="a ln" style="top:505px">52</div><div class="a cl" style="top:505px">  <span class="k">Enchantments:</span> </div>
<div class="a ln" style="top:523px">53</div><div class="a cl" style="top:523px">  - <span class="k">PROTECTION_ENVIRONMENTAL:</span><span class="n">3</span></div>
<div class="a ln" style="top:541px">54</div><div class="a cl" style="top:541px">  - <span class="k">PROTECTION_FIRE:</span><span class="n">3</span></div>
<div class="a ln" style="top:559px">55</div><div class="a cl" style="top:559px">  - <span class="k">PROTECTION_EXPLOSIONS:</span><span class="n">3</span></div>
<div class="a ln" style="top:577px">56</div><div class="a cl" style="top:577px">  - <span class="k">PROTECTION_PROJECTILE:</span><span class="n">3</span></div>
<div class="a ln" style="top:595px">57</div><div class="a cl" style="top:595px">  - <span class="k">DURABILITY:</span><span class="n">5</span>    </div>
<div class="a ln" style="top:613px">58</div><div class="a cl" style="top:613px"><span class="k">Equipments2:</span></div>
<div class="a ln" style="top:631px">59</div><div class="a cl" style="top:631px">  <span class="k">ID:</span> <span class="n">267</span></div>
<div class="a ln" style="top:649px">60</div><div class="a cl" style="top:649px">  <span class="k">Data:</span> <span class="n">0</span></div>
<div class="a ln" style="top:667px">61</div><div class="a cl" style="top:667px">  <span class="k">Amount:</span> <span class="n">1</span></div>
<div class="a ln" style="top:685px">62</div><div class="a cl" style="top:685px">  <span class="k">Display:</span> '&amp;rKiếm &amp;fSkeleton'</div>
<div class="a ln" style="top:703px">63</div><div class="a cl" style="top:703px">  <span class="k">Lore:</span></div>
<div class="a ln" style="top:721px">64</div><div class="a cl" style="top:721px">  - '&amp;6Kiếm'</div>
<div class="a ln" style="top:739px">65</div><div class="a cl" style="top:739px">  <span class="k">Enchantments:</span> </div>
<div class="a ln" style="top:757px">66</div><div class="a cl" style="top:757px">  - <span class="k">DAMAGE_ALL:</span><span class="n">5</span></div>
<div class="a ln" style="top:775px">67</div><div class="a cl" style="top:775px">  - <span class="k">FIRE_ASPECTNS:</span><span class="n">3</span></div>
<div class="a ln" style="top:793px">68</div><div class="a cl" style="top:793px">  - <span class="k">KNOCKBACK:</span><span class="n">2</span> </div>
<div class="a ln" style="top:811px">69</div><div class="a cl" style="top:811px"><span class="k">Drops1:</span></div>
<div class="a ln" style="top:829px">70</div><div class="a cl" style="top:829px">  <span class="k">ID:</span> <span class="n">352</span></div>
<div class="a ln" style="top:847px">71</div><div class="a cl" style="top:847px">  <span class="k">Data:</span> <span class="n">0</span></div>
<div class="a ln" style="top:865px">72</div><div class="a cl" style="top:865px">  <span class="k">Amount:</span> <span class="n">1</span></div>
<div class="a ln" style="top:883px">73</div><div class="a cl" style="top:883px">  <span class="k">Display:</span> '&amp;fXương &amp;a[&amp;2Cấp &amp;c&amp;l1&amp;a]'</div>
<div class="a ln" style="top:901px">74</div><div class="a cl" style="top:901px">  <span class="k">Lore:</span></div>
<div class="a ln" style="top:919px">75</div><div class="a cl" style="top:919px">  - '&amp;aNhận Được Khi Hạ Được &amp;fNgười Xương &amp;a[&amp;2Cấp &amp;c&amp;l1&amp;a]'</div>
<div class="a ln" style="top:937px">76</div><div class="a cl" style="top:937px">  - '&amp;aDùng Để Làm Nhiệm Vụ'</div>
<div id="sbt" class="a"></div><div class="a sbb" style="top:91px"><svg class="a" style="left:4px;top:6px" width="7" height="4" viewBox="0 0 7 4"><path d="M3 0h1v1h1v1h1v1h1v1H0V3h1V2h1V1h1z" fill="#000"/></svg></div><div class="a sbb" style="top:940px"><svg class="a" style="left:4px;top:6px" width="7" height="4" viewBox="0 0 7 4"><path d="M0 0h7v1H6v1H5v1H4v1H3V3H2V2H1V1H0z" fill="#000"/></svg></div><div class="a sbb" style="top:414px;height:526px"></div>
<div class="a sp" style="left:0px;width:540px"><span class="a" id="sp0" style="left:1px;top:2px;white-space:pre;letter-spacing:-0.23px;">YAML Ain't Markup Language</span></div><div class="a sp" style="left:542px;width:198px"><span class="a" id="sp1" style="left:1px;top:2px;white-space:pre;letter-spacing:0.003px;">length : 1,525    lines : 76</span></div><div class="a sp" style="left:742px;width:258px"><span class="a" id="sp2" style="left:0px;top:2px;white-space:pre;letter-spacing:-0.042px;">Ln : 45    Col : 1    Sel : 587 | 32</span></div><div class="a sp" style="left:1002px;width:108px"><span class="a" id="sp3" style="left:1px;top:2px;white-space:pre;letter-spacing:-0.248px;">Unix (LF)</span></div><div class="a sp" style="left:1112px;width:118px"><span class="a" id="sp4" style="left:1px;top:2px;white-space:pre;letter-spacing:-0.534px;">UTF-8</span></div><div class="a sp" style="left:1232px;width:28px"><span class="a" id="sp5" style="left:1px;top:2px;white-space:pre;letter-spacing:-0.448px;">INS</span></div>
<div id="tk" class="a">
<!-- start button -->
<div class="a rb" style="left:2px;top:4px;width:52px;height:38px">
<svg class="a" style="left:2px;top:10px" width="17" height="15" viewBox="0 0 17 15"><path d="M2.300 1.200q2.600 -1.600 5.300 .2l-1.300 5.200q-2.700 -1.800 -5.300 -.2z" fill="#f0532c"/><path d="M8.400 1.800q2.800 1.500 5.600 -.3l-1.400 5.300q-2.700 1.700 -5.500 .2z" fill="#7cc043"/><path d="M.8 7.300q2.600 -1.600 5.300 .2l-1.400 5.300q-2.600 -1.800 -5.200 -.2z" fill="#3a8ee0"/><path d="M6.900 7.900q2.800 1.500 5.500 -.2l-1.400 5.300q-2.700 1.700 -5.500 .2z" fill="#fcc028"/></svg>
<span class="a" id="st" style="left:18px;top:11px;line-height:14px;font-weight:bold;font-size:11.5px;letter-spacing:.6px">Start</span></div>
<div class="a" style="left:61px;top:6px;width:3px;height:34px;border-left:1px solid #fff;border-right:1px solid #808080"></div>
<!-- server manager -->
<svg class="a" style="left:81px;top:7px" width="32" height="32" viewBox="0 0 32 32">
<defs><linearGradient id="g1" x1="0" x2="1"><stop offset="0" stop-color="#9aa8ac"/><stop offset=".45" stop-color="#dfe8ea"/><stop offset="1" stop-color="#7c8c92"/></linearGradient>
<linearGradient id="g2" x1="0" x2="0" y1="0" y2="1"><stop offset="0" stop-color="#b4c8cc"/><stop offset="1" stop-color="#70868c"/></linearGradient></defs>
<path d="M2.500 1h9l9 .5v20h-9l-9 1z" fill="url(#g1)"/><path d="M11.500 1l9 .5v20l-9 0z" fill="#8c9a9e"/><path d="M12.500 2l7 .5v8z" fill="#c4d0d2" opacity=".7"/>
<path d="M3 4h8M3 6.500h8M3 9h8M3 11.500h8M3 14h8M3 16.500h6M3 19h4" stroke="#687478" stroke-width="1"/><path d="M3 2.500h7" stroke="#3c4448" stroke-width="1.200"/>
<path d="M6.500 15.500l11 -1.500l12.500 3v10l-11 4l-12.500 -4.500z" fill="url(#g2)"/><path d="M6.500 15.500l12.500 4l11 -2.500" fill="none" stroke="#d8e4e6" stroke-width=".8"/><path d="M19 19.500v11" stroke="#5c7076" stroke-width=".8"/><path d="M19 19.500l11 -2.500v10l-11 4z" fill="#8aa0a6" opacity=".7"/>
<path d="M13.500 16.500q.5 -4 4 -4t5 4.500" fill="none" stroke="#20262a" stroke-width="1.400"/>
<ellipse cx="10.500" cy="21.500" rx="1" ry="1.800" fill="#e8ecec" stroke="#4c585c" stroke-width=".6"/><ellipse cx="16" cy="23.500" rx="1" ry="1.800" fill="#e8ecec" stroke="#4c585c" stroke-width=".6"/>
</svg>
<!-- explorer -->
<div class="a rb" style="left:122px;top:4px;width:48px;height:38px">
<svg class="a" style="left:7px;top:5px" width="33" height="30" viewBox="0 0 33 30">
<defs><linearGradient id="gf" x1="0" x2="1" y1="0" y2="1"><stop offset="0" stop-color="#fdf1b4"/><stop offset="1" stop-color="#f2d466"/></linearGradient>
<linearGradient id="gb" x1="0" x2="0" y1="0" y2="1"><stop offset="0" stop-color="#8cd4f4"/><stop offset="1" stop-color="#3aa0e0"/></linearGradient></defs>
<path d="M2 1.500q0 -1 1 -1h12q1 0 1 1v4h-14z" fill="#f6e08c" stroke="#d8b458" stroke-width=".8"/><rect x="4" y="1.500" width="3" height="1.800" fill="#10c428"/><rect x="7.500" y="1.500" width="6" height="1.800" fill="#fff"/>
<path d="M10.500 3.500q0 -1 1 -1h18q1 0 1 1v4h-20z" fill="#f6e08c" stroke="#d8b458" stroke-width=".8"/><rect x="12.500" y="3.500" width="3" height="1.800" fill="#e02c2c"/><rect x="16" y="3.500" width="7" height="1.800" fill="#fff"/>
<path d="M18 6.500q0 -1 1 -1h12q1 0 1 1v4h-14z" fill="#f6e08c" stroke="#d8b458" stroke-width=".8"/><rect x="20.500" y="6.500" width="3" height="1.800" fill="#189cf0"/><rect x="24" y="6.500" width="6" height="1.800" fill="#fff"/>
<path d="M1 6.500h16.500l2 2.500h12.500v17q0 1 -1 1h-29q-1 0 -1 -1z" fill="url(#gf)" stroke="#d0ac50" stroke-width=".9"/>
<path d="M5.500 17q0 -1.500 1.500 -1.500h20q1.500 0 1.500 1.500v11q0 1 -1 1h-4.500q-1 0 -1 -1v-6.500h-10v6.500q0 1 -1 1h-4.500q-1 0 -1 -1z" fill="url(#gb)" stroke="#2c8cd0" stroke-width=".8" opacity=".95"/><path d="M7 17h19" stroke="#d4f0fc" stroke-width="1.200"/><circle cx="8" cy="17.500" r="2" fill="#fff" opacity=".9"/><path d="M8 11.500v12M2.500 17.500h11M4.500 21l7 -7" stroke="#fff" stroke-width=".6" opacity=".8"/>
</svg></div>
<!-- xampp -->
<svg class="a" style="left:180px;top:7px" width="32" height="32" viewBox="0 0 32 32">
<defs><linearGradient id="gx" x1="0" x2="0" y1="0" y2="1"><stop offset="0" stop-color="#f68a3c"/><stop offset=".12" stop-color="#f07a24"/><stop offset="1" stop-color="#ec6c14"/></linearGradient></defs>
<rect x=".5" y=".5" width="31" height="31" rx="3.500" fill="url(#gx)" stroke="#d86410" stroke-width="1"/><path d="M4 2.500h24" stroke="#fbb888" stroke-width="1.600" stroke-linecap="round"/>
<g fill="none" stroke="#fff" stroke-width="4" stroke-linecap="round" stroke-linejoin="round"><circle cx="10.500" cy="11.500" r="3.600"/><circle cx="21.500" cy="11.500" r="3.600"/><circle cx="10.500" cy="20.500" r="3.600"/><circle cx="21.500" cy="20.500" r="3.600"/></g>
<rect x="9" y="12.500" width="14" height="7" fill="#fff"/><path d="M10.500 16h11" stroke="#f07a24" stroke-width="3.200" stroke-linecap="round"/><circle cx="10.500" cy="11.500" r="1.700" fill="#f07a24"/><circle cx="21.500" cy="11.500" r="1.700" fill="#f07a24"/><circle cx="10.500" cy="20.500" r="1.700" fill="#f07a24"/><circle cx="21.500" cy="20.500" r="1.700" fill="#f07a24"/>
<path d="M10.500 12.500l1.500 3.500M21.500 12.500l-1.500 3.500M10.500 19.500l1.500 -3.500M21.500 19.500l-1.500 -3.500" stroke="#f07a24" stroke-width="2.600" stroke-linecap="round"/>
</svg>
<!-- coccoc -->
<svg class="a" style="left:229px;top:6px" width="34" height="34" viewBox="0 0 34 34">
<circle cx="17" cy="17.500" r="16" fill="#fff"/>
<path d="M14 3.200a14.500 14.500 0 1 0 17.300 13.300l-7.300 1.600a7.300 7.300 0 1 1 -8.500 -7.600z" fill="#5cb04c"/>
<circle cx="15.500" cy="17.500" r="4.900" fill="#5cb04c"/>
<path d="M17.500 9.500l1.300 -7.500l2.600 .8l-2.300 7.300z" fill="#f07a24"/><path d="M21 10.500l4.500 -8l4.500 -.3l-6.500 9.800z" fill="#5cb04c"/><path d="M23.500 13.500l6 -4l1.300 2.500l-6.500 3.300z" fill="#f07a24"/>
</svg>
<!-- cmd (stacked) -->
<div class="a rb" style="left:280px;top:4px;width:40px;height:38px"></div>
<div class="a rb" style="left:276px;top:4px;width:40px;height:38px;background:#d4d0c8"></div>
<div class="a rb" style="left:272px;top:4px;width:40px;height:38px;background:#d4d0c8">
<svg class="a" style="left:3px;top:5px" width="30" height="25" viewBox="0 0 30 25"><rect x=".5" y=".5" width="29" height="24" fill="#000" stroke="#687088" stroke-width="1"/><rect x="1" y="1" width="28" height="2.400" fill="#c8d4e4"/><path d="M22 2h6" stroke="#7088c0" stroke-width="1" stroke-dasharray="1.500 1"/><path d="M1 4h28v4l-28 9z" fill="#fff" opacity=".12"/>
<text x="3" y="12.500" font-family="Liberation Mono" font-weight="bold" font-size="8" fill="#fff" textLength="15">C:\</text><path d="M18.500 12h8" stroke="#fff" stroke-width="1.200"/></svg></div>
<!-- npp pressed -->
<div class="a pb" style="left:322px;top:4px;width:48px;height:38px">
<svg class="a" style="left:7px;top:1px" width="32" height="33" viewBox="0 0 32 33">
<defs><linearGradient id="gn" x1="0" x2="0" y1="0" y2="1"><stop offset="0" stop-color="#fff"/><stop offset=".38" stop-color="#fff"/><stop offset=".5" stop-color="#d8f060"/><stop offset=".8" stop-color="#58c020"/><stop offset="1" stop-color="#108810"/></linearGradient></defs>
<path d="M1.500 1.500h17l6 6v24.500h-23z" fill="#fff" stroke="#808488" stroke-width="1"/><path d="M2.500 4h22v26.500h-22z" fill="url(#gn)"/><path d="M2.500 2.500h16l5.500 5.500h-21.500z" fill="#fff"/>
<path d="M18.500 1.500v6h6z" fill="#e0e0e0" stroke="#808488" stroke-width=".8"/><path d="M3 3h15" stroke="#909090" stroke-width="1" stroke-dasharray="1 1"/><path d="M3 5.500h15M3 8h21M3 10.500h21" stroke="#c8dcf0" stroke-width="1"/>
<path d="M6.500 20v-9q0 -2.500 2 -2.500t2 2.500v8" fill="#fff" stroke="#181818" stroke-width="1.500"/><path d="M12 14.500h4M14 12.500v4M17 14.500h4M19 12.500v4" stroke="#101010" stroke-width="1.300"/>
<path d="M28 3.500l2 1.300l-11 20l-2.300 1.500l.1 -2.700z" fill="#f4a818" stroke="#c07808" stroke-width=".6"/><path d="M27.200 3l2.600 1.600l1 -1.800l-2.600 -1.500z" fill="#8890a8"/><path d="M28.200 1.300l2.600 1.500l.8 -1.500q-1 -1.800 -2.700 -1.200z" fill="#e01830"/><path d="M16.700 26.300l.1 -1.500l1.200 .7z" fill="#303030"/>
</svg></div>
<!-- notepad -->
<div class="a rb" style="left:372px;top:4px;width:48px;height:38px">
<svg class="a" style="left:7px;top:4px" width="32" height="30" viewBox="0 0 32 30">
<defs><linearGradient id="gp" x1="0" x2="1" y1="0" y2="1"><stop offset="0" stop-color="#a8e0f0"/><stop offset=".5" stop-color="#68c0e0"/><stop offset="1" stop-color="#3c98c8"/></linearGradient></defs>
<path d="M27.500 5l2.500 1v20l-3 1z" fill="#c89848"/><path d="M13 2l15.500 3.500l-4 23l-3 -1z" fill="#f0f4f8" stroke="#d0d8e0" stroke-width=".5"/><path d="M11.500 3l15 3l-7 19.500l-18.500 -6z" fill="url(#gp)"/><path d="M12 2.500l15 3" stroke="#a8b0b0" stroke-width="1.600" stroke-dasharray="1 1"/><path d="M19.500 25.500l7 -19.500l1.500 .5l-4 22z" fill="#e4ecf0"/><path d="M21 23l5 -14M22 25l4.500 -14" stroke="#c8d4dc" stroke-width=".5"/>
</svg></div>
<!-- tray -->
<div class="a" style="left:1071px;top:6px;width:3px;height:34px;border-left:1px solid #fff;border-right:1px solid #808080"></div>
<span class="a" id="en" style="left:1081px;top:13px;line-height:14px;font-size:11px;letter-spacing:.5px">EN</span>
<div class="a" style="left:1102px;top:10px;width:2px;height:22px;border-left:1px solid #808080;border-right:1px solid #fff"></div>
<div class="a" style="left:1106px;top:4px;width:172px;height:38px;border:1px solid;border-color:#808080 #fff #fff #808080"></div>
<svg class="a" style="left:1112px;top:17px" width="7" height="8" viewBox="0 0 7 8" shape-rendering="crispEdges"><path d="M3 0h1v1h1v1h1v1h1v1H5V3H4V2H3v1H2v1H0V3h1V2h1V1h1z M3 4h1v1h1v1h1v1h1v1H5V7H4V6H3v1H2v1H0V7h1V6h1V5h1z" fill="#000"/></svg>
<svg class="a" style="left:1128px;top:15px" width="17" height="16" viewBox="0 0 17 16"><path d="M1.500 .5v15" stroke="#707070" stroke-width="1.600"/><path d="M1 .5h1.500" stroke="#fff" stroke-width="1"/><path d="M3 1.500q3 -1.200 6 0t7 .5l-2 3.500l2 3q-4 1 -7 0t-6 0z" fill="#fff" stroke="#8c8c8c" stroke-width=".9"/><path d="M3.500 8q3 -1 5.500 0t6 .3" stroke="#c8c8c8" stroke-width=".8" fill="none"/></svg>
<svg class="a" style="left:1152px;top:15px" width="18" height="16" viewBox="0 0 18 16"><rect x="5.500" y="2.500" width="11" height="9" fill="#c4c4c4" stroke="#787878" stroke-width="1"/><rect x="6.500" y="3.500" width="9" height="7" fill="#d8d8d8"/><path d="M7 14.500h8M11 12v2.500" stroke="#787878" stroke-width="1.400"/><path d="M16.500 3v8.500h-11" stroke="#fff" stroke-width=".8" fill="none"/>
<path d="M1.500 .5v4M4.500 .5v4M.5 4.500h5v2.500h-5zM3 7v8" stroke="#606060" stroke-width="1.100" fill="#e8e8e8"/><path d="M3 15h4" stroke="#606060" stroke-width="1.100"/></svg>
<svg class="a" style="left:1176px;top:14px" width="19" height="18" viewBox="0 0 19 18"><path d="M1 6h2.500l4.500 -4.500v13l-4.500 -4.500h-2.500z" fill="#f4f4f4" stroke="#808080" stroke-width=".9"/><path d="M8 2v12.500" stroke="#606060" stroke-width=".8"/><circle cx="12.500" cy="11" r="4.800" fill="#e42424" stroke="#f8d0d0" stroke-width=".7"/><path d="M10.300 8.800l4.400 4.400M14.700 8.800l-4.400 4.400" stroke="#fff" stroke-width="1.700"/></svg>
<span class="a" id="tm" style="left:1209px;top:8px;line-height:14px;font-size:11px;white-space:nowrap">5:31 AM</span>
<span class="a" id="dt" style="left:1207px;top:24px;line-height:14px;font-size:11px;white-space:nowrap;letter-spacing:.2px">8/6/2017</span>
<svg class="a" style="left:1260px;top:17px" width="16" height="13" viewBox="0 0 16 13"><defs><linearGradient id="gd" x1="0" x2="1" y1="0" y2="1"><stop offset="0" stop-color="#2c64c8"/><stop offset=".6" stop-color="#4c94f0"/><stop offset="1" stop-color="#78b8f8"/></linearGradient></defs><rect x=".5" y=".5" width="15" height="12" fill="url(#gd)" stroke="#7ca8e8" stroke-width="1"/><rect x="1" y="9.500" width="14" height="2" fill="#182848"/><circle cx="3" cy="10" r="1.400" fill="#e8a030"/><circle cx="3" cy="10" r=".7" fill="#40a040"/></svg>
</div>
</div></body></html>
